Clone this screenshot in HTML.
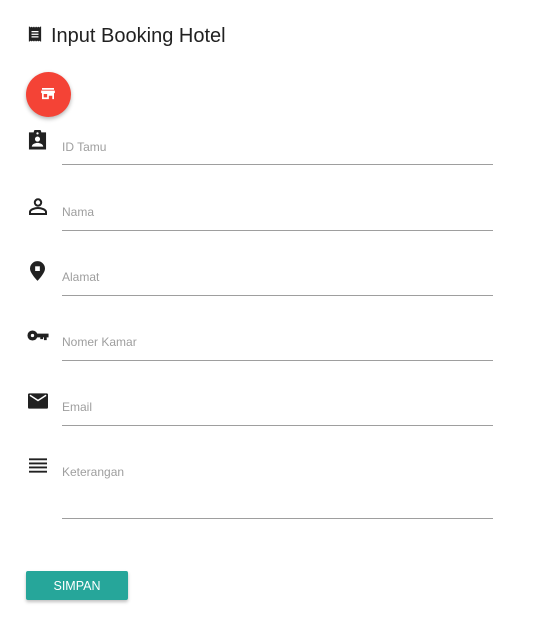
<!DOCTYPE html>
<html><head><style>
body{margin:0;width:555px;height:627px;background:#fff;font-family:"Liberation Sans",sans-serif;position:relative;overflow:hidden}
.a{position:absolute}
.lbl{position:absolute;left:62px;font-size:12px;color:#9e9e9e}
.ln{position:absolute;left:62px;width:431px;height:1px;background:#9e9e9e}
svg{position:absolute}
</style></head><body>
<svg style="left:28px;top:26px" width="14" height="16" viewBox="0 0 16 17"><path d="M1 0h1l1 1 1-1 1 1 1-1 1 1 1-1 1 1 1-1 1 1 1-1 1 1 1-1h1v17h-1l-1-1-1 1-1-1-1 1-1-1-1 1-1-1-1 1-1-1-1 1-1-1-1 1H1z" fill="#212121"/><path d="M4 5h8v1.5H4zM4 8h8v1.5H4zM4 11h8v1.5H4z" fill="#fff"/></svg>
<div class="a" style="left:51px;top:25px;font-size:20px;color:#212121">Input Booking Hotel</div>
<div class="a" style="left:26px;top:72px;width:45px;height:45px;border-radius:50%;background:#f44336;box-shadow:0 2px 4px rgba(0,0,0,.3)"></div>
<svg style="left:41px;top:88px" width="14" height="12" viewBox="0 0 16 14"><path d="M1 0h14v2H1zM0 3h16v3h-1v7h-2V9H9v4H1V6H0zM3 7v4h4V7z" fill="#fff"/></svg>
<svg style="left:28px;top:130px" width="19" height="20" viewBox="0 0 20 20"><path d="M1 2h5a4 4 0 0 1 8 0h5v18H1z" fill="#212121"/><circle cx="10" cy="3" r="1.2" fill="#fff"/><circle cx="10" cy="9" r="2.7" fill="#fff"/><path d="M4 17c0-3 4-4 6-4s6 1 6 4z" fill="#fff"/></svg>
<div class="lbl" style="top:140px">ID Tamu</div><div class="ln" style="top:164px"></div>
<svg style="left:29px;top:198px" width="18" height="17" viewBox="0 0 18 17"><circle cx="9" cy="4.5" r="3.2" fill="none" stroke="#212121" stroke-width="2"/><path d="M1 16v-2c0-2.5 5-4 8-4s8 1.5 8 4v2z" fill="none" stroke="#212121" stroke-width="2"/></svg>
<div class="lbl" style="top:205px">Nama</div><div class="ln" style="top:230px"></div>
<svg style="left:30px;top:261px" width="15" height="20" viewBox="0 0 16 21"><path d="M8 0a8 8 0 0 1 8 8c0 5-8 13-8 13S0 13 0 8a8 8 0 0 1 8-8z" fill="#212121"/><rect x="5.5" y="5.5" width="5" height="5" fill="#fff"/></svg>
<div class="lbl" style="top:270px">Alamat</div><div class="ln" style="top:295px"></div>
<svg style="left:27px;top:330px" width="22" height="11" viewBox="0 0 23 12"><circle cx="5.5" cy="6" r="5.5" fill="#212121"/><circle cx="5.5" cy="6" r="1.8" fill="#fff"/><path d="M10 4h13v4h-2v3h-3V8h-1v2h-3V8h-4z" fill="#212121"/></svg>
<div class="lbl" style="top:335px">Nomer Kamar</div><div class="ln" style="top:360px"></div>
<svg style="left:28px;top:393px" width="20" height="16" viewBox="0 0 21 16"><rect width="21" height="16" rx="1.5" fill="#212121"/><path d="M2 2l8.5 5.5L19 2" fill="none" stroke="#fff" stroke-width="1.5"/></svg>
<div class="lbl" style="top:400px">Email</div><div class="ln" style="top:425px"></div>
<svg style="left:29px;top:458px" width="18" height="15" viewBox="0 0 19 15"><path d="M0 0h19v2H0zM0 4.3h19v2H0zM0 8.6h19v2H0zM0 13h19v2H0z" fill="#212121"/></svg>
<div class="lbl" style="top:465px">Keterangan</div><div class="ln" style="top:518px"></div>
<div class="a" style="left:26px;top:571px;width:102px;height:29px;background:#26a69a;border-radius:2px;box-shadow:0 2px 3px rgba(0,0,0,.25);color:#fff;font-size:12.5px;line-height:30px;text-align:center">SIMPAN</div>
</body></html>
